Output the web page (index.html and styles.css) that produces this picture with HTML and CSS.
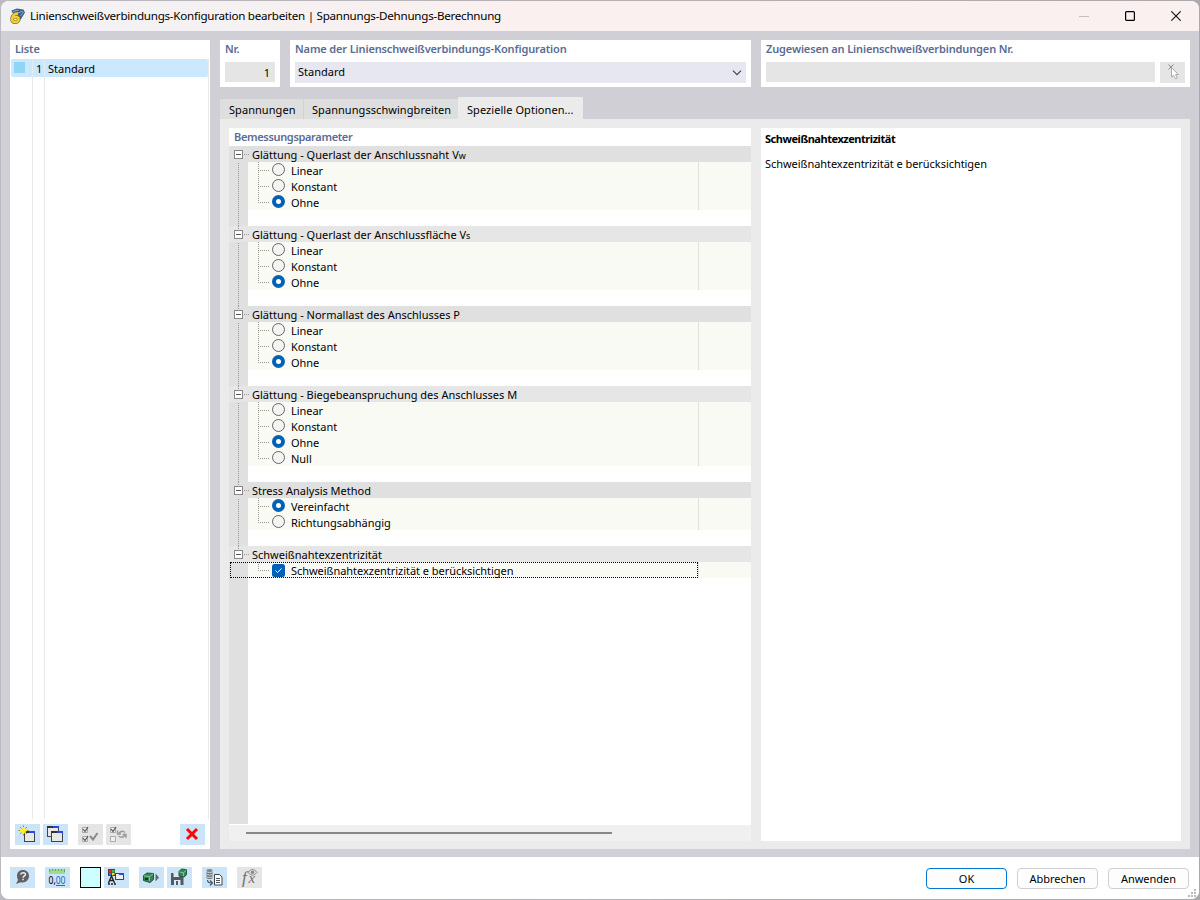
FILE: index.html
```html
<!DOCTYPE html>
<html lang="de">
<head>
<meta charset="utf-8">
<title>Linienschweißverbindungs-Konfiguration bearbeiten</title>
<link rel="stylesheet" href="styles.css">
</head>
<body>
<div class="window">
  <header class="titlebar">
    <svg class="appicon" width="16" height="16" viewBox="0 0 16 16"><path d="M2.500 2.500 8 .5 14.500 1.500 16 4.500 13 9.500 11.500 12 8 6 3 4.500Z" fill="#3d5f8c"/><path d="M4 3.500 9.500 2M9 5l5-2M11.500 8l3-4" stroke="#8da9c5"/><path d="M9 5.500C5.500 5.500 3 8 3 11c0 2 1.300 3.200 3.200 3.200S9.700 13 9.700 11.300 8.500 8.800 6.500 8.800 3.500 10 3.200 11" fill="none" stroke="#86701f" stroke-width="3.600"/><path d="M9 5.500C5.500 5.500 3 8 3 11c0 2 1.300 3.200 3.200 3.200S9.700 13 9.700 11.300 8.500 8.800 6.500 8.800 3.500 10 3.200 11" fill="none" stroke="#f7d030" stroke-width="2.300"/></svg>
    <span class="title">Linienschweißverbindungs-Konfiguration bearbeiten | Spannungs-Dehnungs-Berechnung</span>
    <div class="wincontrols">
      <svg width="10" height="10"><path d="M0 5.500h10" stroke="#c4bfbf"/></svg>
      <svg width="10" height="10"><rect x=".6" y=".6" width="8.800" height="8.800" rx="1" fill="none" stroke="#000" stroke-width="1.200"/></svg>
      <svg width="10" height="10"><path d="M.3.3l9.400 9.400M9.700.3.3 9.700" stroke="#111" stroke-width="1.100"/></svg>
    </div>
  </header>

  <main class="content">
    <aside class="card list">
      <h2>Liste</h2>
      <div class="listbody">
        <div class="listrow"><i class="swatch"></i><span class="num">1</span><span>Standard</span></div>
      </div>
      <div class="listtools">
        <button class="tool"><svg width="25" height="21"><rect x="9.500" y="7.500" width="10" height="10" fill="#e8e8e8" stroke="#444"/><path d="M9 8h7" stroke="#333" stroke-width="2"/><path d="M14 8h6" stroke="#2848e8" stroke-width="2"/><path d="M8.500 1.500v10M3.500 6.500h10M5 3l7 7M12 3l-7 7" stroke="#9a8c40"/><path d="M8.500 3v7M5 6.500h7M6.500 4.500l4 4M10.500 4.500l-4 4" stroke="#ffef20" stroke-width="1.500"/></svg></button>
        <button class="tool"><svg width="25" height="21"><rect x="4.500" y="2.500" width="11" height="10" fill="#e8e8e8" stroke="#444"/><path d="M4 3h7" stroke="#333" stroke-width="2"/><path d="M10 3h6" stroke="#2848e8" stroke-width="2"/><rect x="8.500" y="7.500" width="11" height="10" fill="#e8e8e8" stroke="#444"/><path d="M8 8h7" stroke="#333" stroke-width="2"/><path d="M14 8h6" stroke="#2848e8" stroke-width="2"/></svg></button>
        <button class="tool off gap"><svg width="25" height="21" fill="none" stroke="#aaa"><path d="M4.500 3.500h5v5h-5zM4.500 12.500h5v5h-5z" fill="#f0f0f0"/><path d="M5 5l2 2.500 3-4.500M5 14l2 2.500 3-4.500" stroke="#555" stroke-width="1.200"/><path d="M12 12l3 3.500 4.500-6.500" stroke="#8a8a8a" stroke-width="2"/></svg></button>
        <button class="tool off"><svg width="25" height="21" fill="none" stroke="#aaa"><path d="M4.500 3.500h5v5h-5zM4.500 12.500h5v5h-5z" fill="#f0f0f0"/><path d="M5 5l2 2.500 3-4.500" stroke="#555" stroke-width="1.200"/><path d="M19 8.500c-1.500-1.500-4-1.500-6 .5M11.500 6.500v3.500h3.500M12.500 12c2 1.500 4.500 1.500 6.500-.5M20 14v-3.500h-3.500" stroke="#999" stroke-width="1.400"/></svg></button>
        <button class="tool delete"><svg width="25" height="21"><path d="M7 5l10 10M17 5 7 15" stroke="#fb0808" stroke-width="3" fill="none"/></svg></button>
      </div>
    </aside>

    <section class="right">
      <div class="top">
        <div class="card nr"><h2>Nr.</h2><div class="field number">1</div></div>
        <div class="card name"><h2>Name der Linienschweißverbindungs-Konfiguration</h2><div class="select"><span>Standard</span><svg width="10" height="6"><path d="M1 .7l4 4 4-4" fill="none" stroke="#444" stroke-width="1.200"/></svg></div></div>
        <div class="card assigned"><h2>Zugewiesen an Linienschweißverbindungen Nr.</h2><div class="assignrow"><div class="field"></div><button class="tool off"><svg width="25" height="21"><path d="M8.500 2.500l5 5M13.500 2.500l-5 5" stroke="#888"/><path d="M11.500 5.500v9.500l2-1.700 2 3.500 1.800-.8-1.800-3.500h2.800z" fill="#fff" stroke="#aaa"/></svg></button></div></div>
      </div>

      <nav class="tabs"><span class="tab t1">Spannungen</span><span class="tab t2">Spannungsschwingbreiten</span><span class="tab active">Spezielle Optionen...</span></nav>

      <div class="pane">
        <div class="params">
          <h2>Bemessungsparameter</h2>
          <div class="tree">
            <section class="group">
              <h3><i class="toggle"></i>Glättung - Querlast der Anschlussnaht V<small class="w">w</small></h3>
              <ul><li><i class="radio"></i>Linear</li><li><i class="radio"></i>Konstant</li><li><i class="radio on"></i>Ohne</li></ul>
            </section>
            <section class="group">
              <h3><i class="toggle"></i>Glättung - Querlast der Anschlussfläche V<small>s</small></h3>
              <ul><li><i class="radio"></i>Linear</li><li><i class="radio"></i>Konstant</li><li><i class="radio on"></i>Ohne</li></ul>
            </section>
            <section class="group">
              <h3><i class="toggle"></i>Glättung - Normallast des Anschlusses P</h3>
              <ul><li><i class="radio"></i>Linear</li><li><i class="radio"></i>Konstant</li><li><i class="radio on"></i>Ohne</li></ul>
            </section>
            <section class="group">
              <h3><i class="toggle"></i>Glättung - Biegebeanspruchung des Anschlusses M</h3>
              <ul><li><i class="radio"></i>Linear</li><li><i class="radio"></i>Konstant</li><li><i class="radio on"></i>Ohne</li><li><i class="radio"></i>Null</li></ul>
            </section>
            <section class="group">
              <h3><i class="toggle"></i>Stress Analysis Method</h3>
              <ul><li><i class="radio on"></i>Vereinfacht</li><li><i class="radio"></i>Richtungsabhängig</li></ul>
            </section>
            <section class="group last">
              <h3><i class="toggle"></i>Schweißnahtexzentrizität</h3>
              <ul><li><svg class="check" width="13" height="13"><rect width="13" height="13" rx="2.500" fill="#0060b8"/><path d="M3.500 6.500l2 2 4-4" fill="none" stroke="#fff"/></svg>Schweißnahtexzentrizität e berücksichtigen</li></ul>
              <div class="focus"></div>
            </section>
          </div>
          <div class="scroll"><i></i></div>
        </div>
        <div class="info"><h4>Schweißnahtexzentrizität</h4><p>Schweißnahtexzentrizität e berücksichtigen</p></div>
      </div>
    </section>
  </main>

  <footer class="footer">
    <button class="tool"><svg width="25" height="21"><path d="M13 3C9 3 7 5.500 7 9c0 1.500.3 2.800 1 4L6 17l4.500-1.800c5 1.200 8.500-2 8.500-6.200 0-3.500-2.500-6-6-6z" fill="#606060"/><path d="M10.700 7.500c.3-2.500 4.800-2.500 4.800 0 0 1.500-2.400 1.500-2.400 3.300M13.100 11.800v1.500" fill="none" stroke="#e4eefa" stroke-width="1.500"/></svg></button>
    <button class="tool g10"><svg width="25" height="21"><rect x="4" y="2" width="16" height="5" fill="#9bdc90"/><path d="M4.500 2v3M7.500 2v2M10.500 2v2M13.500 2v2M16.500 2v2M19.500 2v3" stroke="#62a85d"/><text x="3.500" y="16.500" class="digits" textLength="17" lengthAdjust="spacingAndGlyphs">0,<tspan fill="#2866cc">00</tspan></text><path d="M11 18.500h9" stroke="#2866cc"/></svg></button>
    <button class="color g10"></button>
    <button class="tool g3"><svg width="25" height="21"><path d="M4 2h7v7H4z" fill="#444"/><path d="M5 3h2.500v2.500H5z" fill="#ff2020"/><path d="M8 3h2.500v2.500H8z" fill="#36c03b"/><path d="M5 6h2.500v2.500H5z" fill="#3068f8"/><path d="M8 6h2.500v2.500H8z" fill="#f8e028"/><path d="M4.500 16l3-7 3 7M5.500 13.500h4M4 17h2M7 17h2M10 17h2" fill="none" stroke="#222" stroke-width="1.400"/><rect x="11.500" y="6.500" width="8" height="6" fill="#eee" stroke="#444"/><path d="M15 7h5" stroke="#2848e8" stroke-width="2"/><path d="M9 8.500h3" stroke="#333"/></svg></button>
    <button class="tool g10"><svg width="25" height="21"><path d="M4.500 8.500 8 6l6.500.5v6L11 15.500l-6.500-2z" fill="#338556" stroke="#245940"/><path d="M5 8.800l5.500.7L14 7M10.500 10v4" stroke="#82ca98" fill="none"/><path d="M6 12h3" stroke="#123320" stroke-width="2"/><path d="M16.500 6.500l3.500 4-3.500 4z" fill="#606970"/></svg></button>
    <button class="tool g3"><svg width="25" height="21"><path d="M4 6h11l1.500 1.500V18H4z" fill="#505b63"/><path d="M6.500 6h6v4h-6zM7 13h6.500v5H7z" fill="#dce9f5"/><path d="M9 14h2v4H9z" fill="#505b63"/><path d="M12 4.500 14.500 2l5 .8v5L17 10l-5-1z" fill="#338556" stroke="#245940"/><path d="M12.500 5l4 .7 2.500-2M16.500 6v3" stroke="#82ca98" fill="none"/></svg></button>
    <button class="tool g10"><svg width="25" height="21"><path d="M4.500 3.500v7c0 2 6 2 6 0v-7z" fill="#707478"/><ellipse cx="7.500" cy="3.300" rx="3" ry="1.300" fill="#888"/><path d="M4.500 4.500c1 1.300 5 1.300 6 0M4.500 7c1 1.300 5 1.300 6 0M4.500 9.500c1 1.300 5 1.300 6 0" stroke="#dfeaf4" fill="none" stroke-width=".9"/><path d="M5.500 13c0 2 1 3 4 3M8 13.500l2.500 2.500L8 18.500" fill="none" stroke="#505860" stroke-width="1.200"/><path d="M12.500 7.500h5l2.500 2.500v8h-7.500z" fill="#fff" stroke="#404448"/><path d="M14 11.500h4M14 13.500h4M14 15.500h4" stroke="#505458"/></svg></button>
    <button class="tool off g10"><svg width="25" height="21"><text x="5" y="15.500" class="fx">f</text><text x="11.500" y="16" class="fx x">x</text><path d="M11 5.500c3-4 6-4 9 0-3 3.500-6 3.500-9 0z" fill="none" stroke="#888"/><circle cx="15.500" cy="5.300" r="1.800" fill="#888"/></svg></button>
    <div class="actions"><button class="push primary">OK</button><button class="push">Abbrechen</button><button class="push">Anwenden</button></div>
    <svg class="grip" width="8" height="8" fill="#bbb"><path d="M6 0h2v2H6zM3 3h2v2H3zM6 3h2v2H6zM0 6h2v2H0zM3 6h2v2H3zM6 6h2v2H6z"/></svg>
  </footer>
</div>
</body>
</html>
```
FILE: styles.css
```css
* { box-sizing: border-box; }
body { margin: 0; width: 1200px; height: 900px; padding: 1px; overflow: hidden; background: linear-gradient(90deg, #bbbac0, #aaa9ae); font: 11px/16px "Noto Sans", sans-serif; color: #000; }
h2, h3, h4, p, ul { margin: 0; padding: 0; font: inherit; list-style: none; }
button { padding: 0; border: 0; font: inherit; color: inherit; }
svg { display: block; flex: none; }
.window { height: 898px; display: flex; flex-direction: column; border-radius: 8px; overflow: hidden; background: #fff; }
.titlebar { height: 30px; display: flex; align-items: center; padding: 0 18px 0 8px; background: linear-gradient(90deg, #f2f2f5, #f9f0ef 38%); flex: none; }
.title { margin-left: 5px; font-size: 11.6px; white-space: nowrap; letter-spacing: -0.25px; }
.wincontrols { display: flex; gap: 36px; margin-left: auto; }
.content { flex: 1; display: flex; gap: 10px; padding: 9px 9px 8px; background: #d0cfd5; }
.card { background: #fff; padding: 0 5px; }
h2 { color: #5a6b94; font-weight: 600; height: 18px; line-height: 18px; white-space: nowrap; letter-spacing: -0.14px; }
.list { width: 200px; display: flex; flex-direction: column; }
.list h2 { height: 19px; }
.listbody { flex: 1; margin: 0 -4px; background: linear-gradient(#e8e8e8, #e8e8e8) 21px 0/1px 100% no-repeat, linear-gradient(#e8e8e8, #e8e8e8) 33px 0/1px 100% no-repeat, linear-gradient(#e8e8e8, #e8e8e8) 197px 0/1px 100% no-repeat; }
.listrow { height: 18px; display: flex; line-height: 20px; background: linear-gradient(#e1edf5, #e1edf5) 21px 0/1px 100% no-repeat, linear-gradient(#e1edf5, #e1edf5) 33px 0/1px 100% no-repeat, #cce8ff; border-radius: 2px; width: 197px; }
.swatch { width: 11px; height: 11px; margin: 3px 0 0 3px; background: #8fd5f5; }
.num { width: 23px; padding-left: 11px; }
.listtools { display: flex; gap: 3px; padding: 5px 0 4px; }
.tool { width: 25px; height: 21px; background: #cce4f7; flex: none; }
.tool.off { background: #e5e5e5; }
.gap { margin-left: 7px; }
.delete { margin-left: auto; }
.right { flex: 1; display: flex; flex-direction: column; }
.top { display: flex; gap: 10px; height: 47px; }
.top h2 { height: 22px; }
.nr { width: 60px; }
.name { width: 461px; }
.assigned { flex: 1; }
.field { height: 20px; flex: 1; background: #e5e5e5; line-height: 22px; }
.number { text-align: right; padding-right: 5px; }
.select { height: 21px; background: #e7e7f2; display: flex; align-items: center; justify-content: space-between; padding: 0 4px 0 3px; }
.select span { padding-bottom: 2px; }
.assignrow { display: flex; gap: 5px; }
.tabs { height: 32px; padding-top: 10px; display: flex; align-items: flex-end; letter-spacing: 0.06px; }
.tab { height: 20px; line-height: 22px; background: #dedede; white-space: nowrap; padding-left: 9px; }
.t1 { width: 84px; border-right: 1px solid #d2d2d2; }
.t2 { width: 154px; padding-left: 8px; }
.active { width: 125px; height: 22px; line-height: 26px; background: #ebebeb; }
.pane { flex: 1; display: flex; gap: 10px; padding: 9px 9px 8px; background: #ebebeb; }
.params { width: 522px; background: #fff; display: flex; flex-direction: column; }
.params h2 { padding-left: 5px; letter-spacing: -0.34px; }
.tree { flex: 1; background: linear-gradient(#e0e0e0, #e0e0e0) 0 0/19px 678px no-repeat; }
.group { position: relative; padding-bottom: 16px; background: repeating-linear-gradient(#999 0 1px, transparent 1px 2px) 9px 13px/1px 100% no-repeat; }
.group.last { background: none; }
h3 { height: 16px; line-height: 18px; display: flex; align-items: flex-start; padding-left: 5px; background: #e0e0e0; white-space: pre; }
.group:nth-child(even) h3 { background: #e6e6e6; }
.group + .group h3::before { content: ""; width: 1px; height: 4px; margin: 0 -5px 0 4px; background: repeating-linear-gradient(#999 0 1px, transparent 1px 2px); }
.toggle { width: 18px; height: 9px; margin-top: 4px; background: linear-gradient(#555, #555) 2px 4px/5px 1px no-repeat, linear-gradient(#fff, #fff) 1px 1px/7px 7px no-repeat, linear-gradient(#888, #888) 0 0/9px 9px no-repeat, repeating-linear-gradient(90deg, #999 0 1px, transparent 1px 2px) 10px 4px/6px 1px no-repeat; }
h3 small { font-size: 9px; line-height: 20px; }
ul { margin-left: 19px; letter-spacing: -0.04px; background: linear-gradient(#e2e2dd, #e2e2dd) 450px 0/1px 100% no-repeat, #fafaf5; }
li { height: 16px; line-height: 18px; display: flex; align-items: flex-start; padding-left: 24px; background: repeating-linear-gradient(#999 0 1px, transparent 1px 2px) 10px 0/1px 100% no-repeat, repeating-linear-gradient(90deg, #999 0 1px, transparent 1px 2px) 10px 8px/12px 1px no-repeat; }
li:last-child { background-size: 1px 9px, 12px 1px; }
.radio { width: 13px; height: 13px; margin: 1px 6px 0 0; border: 1px solid #666; border-radius: 50%; background: #f4f4f4; }
.radio.on { border: 4px solid #0060b8; background: #fff; }
.check { margin: 2px 6px 0 0; }
.focus { position: absolute; left: 1px; top: 16px; width: 468px; height: 16px; border: 1px dotted #000; }
.scroll { height: 16px; background: #f0f0f0; padding: 7px 0 0 17px; }
.scroll i { display: block; width: 366px; height: 2px; background: #888; }
.info { flex: 1; background: #fff; padding: 3px 4px; }
.info h4 { font-weight: 700; letter-spacing: -0.46px; }
.info p { margin-top: 9px; letter-spacing: -0.05px; }
.footer { position: relative; height: 42px; flex: none; display: flex; padding: 10px 10px 0 9px; background: #fff; }
.g10 { margin-left: 10px; }
.g3 { margin-left: 3px; }
.color { width: 21px; height: 21px; background: #ccffff; border: 1px solid #000; }
.digits { font: 10px "Noto Sans", sans-serif; }
.fx { font: italic 17px "Liberation Serif", serif; fill: #707070; }
.x { font-size: 15px; }
.actions { display: flex; gap: 10px; margin: 1px 0 0 auto; }
.push { width: 81px; height: 21px; border: 1px solid #d0d0d0; border-radius: 4px; background: #fdfdfd; line-height: 20px; }
.primary { border-color: #0078d4; }
.grip { position: absolute; right: 3px; bottom: 2px; }
```
